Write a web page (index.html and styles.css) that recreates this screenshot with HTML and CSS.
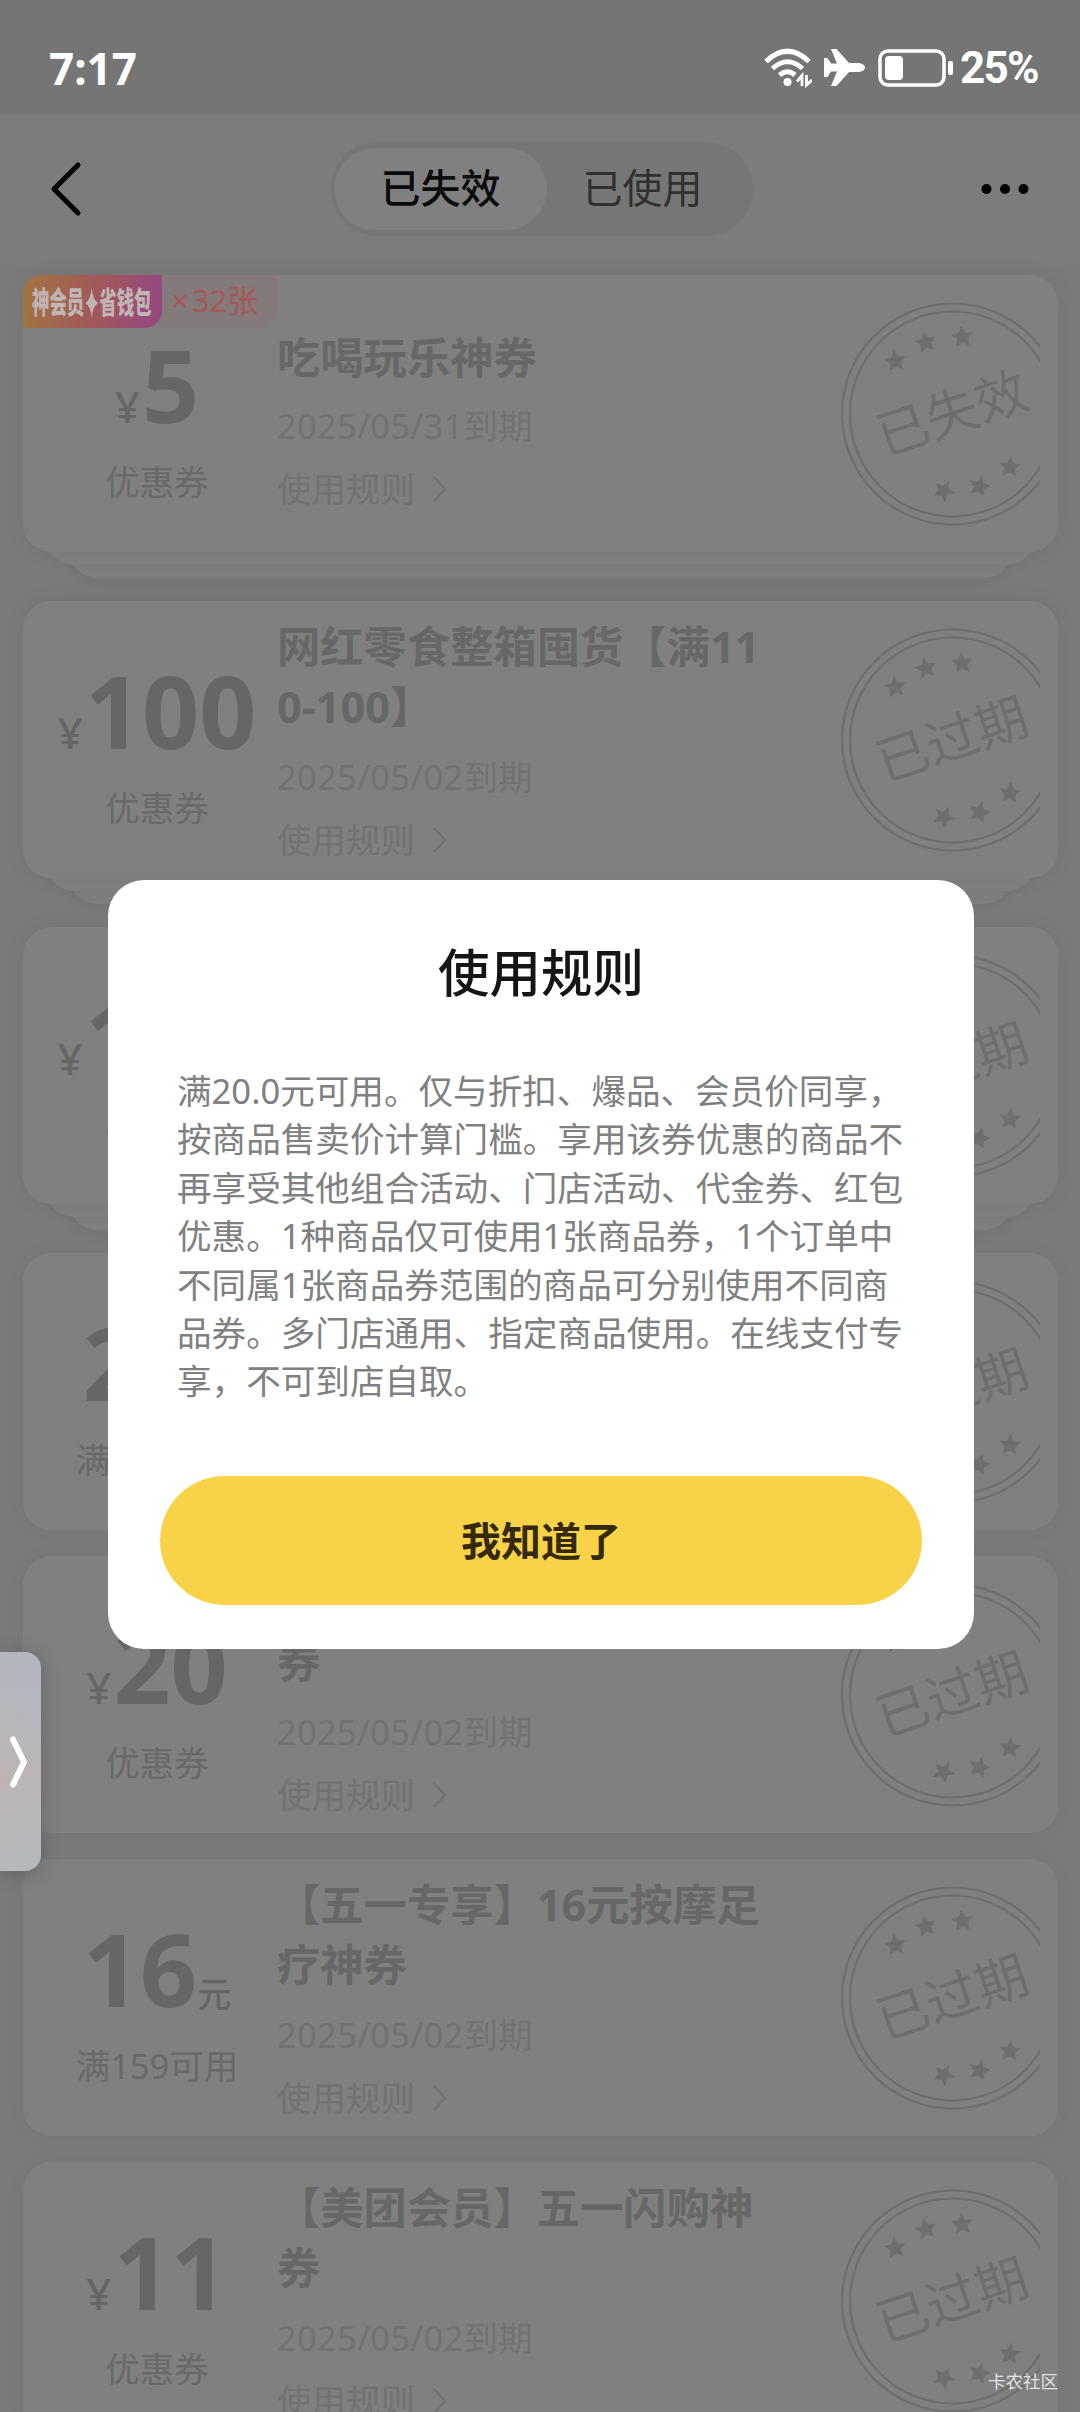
FILE: index.html
```html
<!DOCTYPE html>
<html lang="zh-CN">
<head>
<meta charset="utf-8">
<title>使用规则</title>
<link rel="stylesheet" href="styles.css">
</head>
<body>
<svg class="defs" width="0" height="0">
  <defs>
    <path id="star" d="M0-11.5 3.2-4.1 11-3.5 5.2 1.8 6.8 9.3 0 5.4-6.8 9.3-5.2 1.8-11-3.5-3.2-4.1Z"/>
    <g id="stamp">
      <circle cx="112.5" cy="112" r="110.5" fill="none" stroke="currentColor" stroke-width="2.2"/>
      <circle cx="112.5" cy="112" r="102.5" fill="none" stroke="currentColor" stroke-width="2.2"/>
      <g fill="currentColor">
        <use href="#star" transform="translate(55.3 59) rotate(-8)"/>
        <use href="#star" transform="translate(85.7 40.3) rotate(-12)"/>
        <use href="#star" transform="translate(122 35) rotate(-5)"/>
        <use href="#star" transform="translate(170 165) rotate(5)"/>
        <use href="#star" transform="translate(139.3 184.3) rotate(15)"/>
        <use href="#star" transform="translate(103.7 189) rotate(172)"/>
      </g>
    </g>
  </defs>
</svg>
<div class="screen">
  <header class="status">
    <span class="clock">7:17</span>
    <div class="status-icons">
      <svg width="48" height="40" viewBox="0 0 48 40" fill="none" stroke="#fff" stroke-width="5">
        <path d="M2 13.5Q23.5-7 45 13.500M8.500 20.500Q23.500 7 38.500 20.500M15.500 27Q23.500 20.500 31 27"/>
        <circle cx="23.500" cy="34" r="4" fill="#fff" stroke="none"/>
        <path d="M33 33.500 38 27.500V38M48 32 42.500 37V27" stroke-width="2.800"/>
      </svg>
      <svg class="plane" width="42" height="38" viewBox="0 0 42 38" fill="#fff">
        <path d="M7 0h5.500L25 14h10q6 1 6 4.500T35 23H25L12.500 37H7L13 22.500H7L3.500 28H0V9h3.500L7 14.500h6Z"/>
      </svg>
      <svg class="battery" width="76" height="40" viewBox="0 0 76 40">
        <rect x="2" y="3" width="64" height="34" rx="8" fill="none" stroke="#fff" stroke-width="3.500"/>
        <rect x="7" y="8" width="18" height="24" rx="4" fill="#fff"/>
        <rect x="70" y="13" width="5" height="14" rx="2" fill="#fff"/>
      </svg>
      <span class="percent">25%</span>
    </div>
  </header>

  <nav class="nav">
    <svg class="back" width="34" height="56" viewBox="0 0 34 56" fill="none" stroke="#000" stroke-width="5" stroke-linecap="round" stroke-linejoin="round"><path d="M29 4 5 28l24 24"/></svg>
    <div class="tabs"><span class="tab tab-on">已失效</span><span class="tab">已使用</span></div>
    <svg class="more" width="48" height="12" viewBox="0 0 48 12"><circle cx="5.500" cy="6" r="5"/><circle cx="24" cy="6" r="5"/><circle cx="42.500" cy="6" r="5"/></svg>
  </nav>

  <main class="list">
    <article class="coupon stacked">
      <div class="badge"><span class="badge-brand"><b>神会员<svg width="24" height="32" viewBox="0 0 24 32"><path d="M12 1q2 12 11 15-9 3-11 15-2-12-11-15 9-3 11-15Z" fill="currentColor"/></svg>省钱包</b></span><span class="badge-count"><i>×</i>32张</span></div>
      <div class="value"><p class="amount"><small>¥</small>5</p><p class="cond">优惠券</p></div>
      <div class="info info-single"><h3>吃喝玩乐神券</h3><p class="date">2025/05/31到期</p><p class="rule">使用规则<svg width="16" height="28" viewBox="0 0 16 28"><path d="M2 2l11 12L2 26"/></svg></p></div>
      <svg class="stamp" width="200" height="224"><use href="#stamp"/><text x="112.500" y="130" transform="rotate(-18.600 112.500 112)">已失效</text></svg>
    </article>
    <article class="coupon stacked">
      <div class="value"><p class="amount"><small>¥</small>100</p><p class="cond">优惠券</p></div>
      <div class="info"><h3>网红零食整箱囤货【满11<br>0-100】</h3><p class="date">2025/05/02到期</p><p class="rule">使用规则<svg width="16" height="28" viewBox="0 0 16 28"><path d="M2 2l11 12L2 26"/></svg></p></div>
      <svg class="stamp" width="200" height="224"><use href="#stamp"/><text x="112.500" y="130" transform="rotate(-18.600 112.500 112)">已过期</text></svg>
    </article>
    <article class="coupon stacked">
      <div class="value"><p class="amount"><small>¥</small>100</p><p class="cond">优惠券</p></div>
      <div class="info"></div>
      <svg class="stamp" width="200" height="224"><use href="#stamp"/><text x="112.500" y="130" transform="rotate(-18.600 112.500 112)">已过期</text></svg>
    </article>
    <article class="coupon">
      <div class="value"><p class="amount">20<small class="yuan">元</small></p><p class="cond">满159可用</p></div>
      <div class="info"></div>
      <svg class="stamp" width="200" height="224"><use href="#stamp"/><text x="112.500" y="130" transform="rotate(-18.600 112.500 112)">已过期</text></svg>
    </article>
    <article class="coupon">
      <div class="value"><p class="amount"><small>¥</small>20</p><p class="cond">优惠券</p></div>
      <div class="info"><h3><br>券</h3><p class="date">2025/05/02到期</p><p class="rule">使用规则<svg width="16" height="28" viewBox="0 0 16 28"><path d="M2 2l11 12L2 26"/></svg></p></div>
      <svg class="stamp" width="200" height="224"><use href="#stamp"/><text x="112.500" y="130" transform="rotate(-18.600 112.500 112)">已过期</text></svg>
    </article>
    <article class="coupon">
      <div class="value"><p class="amount">16<small class="yuan">元</small></p><p class="cond">满159可用</p></div>
      <div class="info"><h3>【五一专享】16元按摩足<br>疗神券</h3><p class="date">2025/05/02到期</p><p class="rule">使用规则<svg width="16" height="28" viewBox="0 0 16 28"><path d="M2 2l11 12L2 26"/></svg></p></div>
      <svg class="stamp" width="200" height="224"><use href="#stamp"/><text x="112.500" y="130" transform="rotate(-18.600 112.500 112)">已过期</text></svg>
    </article>
    <article class="coupon">
      <div class="value"><p class="amount"><small>¥</small>11</p><p class="cond">优惠券</p></div>
      <div class="info"><h3>【美团会员】五一闪购神<br>券</h3><p class="date">2025/05/02到期</p><p class="rule">使用规则<svg width="16" height="28" viewBox="0 0 16 28"><path d="M2 2l11 12L2 26"/></svg></p></div>
      <svg class="stamp" width="200" height="224"><use href="#stamp"/><text x="112.500" y="130" transform="rotate(-18.600 112.500 112)">已过期</text></svg>
    </article>
  </main>

  <section class="dialog">
    <h2>使用规则</h2>
    <p class="terms">满20.0元可用。仅与折扣、爆品、会员价同享，<br>按商品售卖价计算门槛。享用该券优惠的商品不<br>再享受其他组合活动、门店活动、代金券、红包<br>优惠。1种商品仅可使用1张商品券，1个订单中<br>不同属1张商品券范围的商品可分别使用不同商<br>品券。多门店通用、指定商品使用。在线支付专<br>享，不可到店自取。</p>
    <button class="ok">我知道了</button>
  </section>

  <aside class="drawer"><svg width="20" height="54" viewBox="0 0 20 54"><path d="M4 4.500 15 27 4 49.500" fill="none" stroke="#fff" stroke-width="6" stroke-linecap="round" stroke-linejoin="round"/></svg></aside>
  <span class="mark">卡农社区</span>
</div>
</body>
</html>
```
FILE: styles.css
```css
* { box-sizing: border-box; margin: 0; padding: 0; }
body { font-family: "Noto Sans", "Noto Sans CJK SC", sans-serif; }
i { font-style: normal; }
.defs { position: absolute; }
.screen { position: relative; width: 1080px; height: 2412px; overflow: hidden; background: #7a7a7a; }

.status { display: flex; justify-content: space-between; align-items: center; height: 114px; padding: 22px 43px 0 49px; background: #757575; color: #fff; font-size: 44px; font-weight: 700; }
.status-icons { display: flex; align-items: center; }
.plane { margin-left: 12px; }
.battery { margin-left: 12px; }
.percent { width: 77px; margin-left: 6px; font-family: Roboto, sans-serif; letter-spacing: -1.800px; white-space: nowrap; }

.nav { display: flex; align-items: center; height: 151px; padding: 0 51px 2px 49px; background: #7c7c7c; }
.tabs { display: flex; width: 422px; height: 94px; margin-left: 248px; padding: 6px 3px; border-radius: 47px; background: #767676; }
.tab { flex: 1; height: 82px; padding-right: 12px; border-radius: 41px; line-height: 80px; text-align: center; font-size: 40px; color: #303030; }
.tab-on { flex: 0 0 213px; padding: 0; background: #808080; color: #0c0c0c; font-weight: 500; }
.more { margin-left: auto; }

.list { isolation: isolate; display: flex; flex-direction: column; gap: 26px; padding: 10px 22px 0 23px; }
.coupon { position: relative; display: flex; flex: none; align-items: center; height: 277px; padding-right: 18px; border-radius: 28px; background: #808080; box-shadow: 0 0 22px rgba(0, 0, 0, .035); }
.stacked { margin-bottom: 23px; box-shadow: 0 0 22px rgba(0, 0, 0, .06); }
.stacked::before, .stacked::after { content: ""; position: absolute; border-radius: 28px; }
.stacked::before { left: 23px; right: 23px; bottom: -13px; height: 80px; z-index: -1; background: #808080; box-shadow: 0 3px 8px rgba(0, 0, 0, .04); }
.stacked::after { left: 46px; right: 46px; bottom: -26px; height: 80px; z-index: -2; background: #7f7f7f; box-shadow: 0 4px 14px rgba(0, 0, 0, .06); }

.value { flex: 0 0 254px; align-self: flex-start; padding: 62px 0 0 14px; display: flex; flex-direction: column; align-items: center; color: #666; }
.amount { height: 115px; line-height: 94px; font-size: 100px; font-weight: 700; white-space: nowrap; }
.amount small { font-size: 44px; font-weight: 500; margin-right: 2px; }
.amount .yuan { font-size: 34px; margin: 0; }
.cond { font-size: 34.500px; line-height: 60px; color: #696969; }
.info { flex: 1; align-self: flex-start; padding-top: 16px; white-space: nowrap; }
.info-single { padding-top: 53px; }
.info h3 { font-size: 43.300px; line-height: 60px; font-weight: 700; color: #676767; }
.date, .rule { font-size: 34.500px; line-height: 63px; color: #727272; }
.date { margin-top: 8px; letter-spacing: .3px; }
.info-single .date { margin-top: 6px; }
.rule { display: flex; align-items: center; gap: 17px; }
.rule path { fill: none; stroke: #727272; stroke-width: 2.500; }
.stamp { flex: none; color: #6e6e6e; overflow: hidden; }
.stamp text { font-size: 52px; text-anchor: middle; fill: currentColor; }

.badge { position: absolute; left: 0; top: 0; display: flex; width: 255px; height: 53px; border-radius: 18px 0 20px 0; background: #84797b; overflow: hidden; }
.badge-brand { flex: none; width: 139px; border-radius: 18px 0 18px 0; background: linear-gradient(100deg, #a27540, #a2585a 52%, #944783); color: #c0b5b5; }
.badge-brand b { display: block; width: 209px; margin-left: 9px; font-size: 30px; line-height: 54px; font-weight: 900; white-space: nowrap; transform: scaleX(.58); transform-origin: 0 50%; }
.badge-brand svg { margin: 0 1px; vertical-align: -6px; }
.badge-count { padding-left: 9px; font-size: 31px; line-height: 50px; color: #a55858; white-space: nowrap; }
.badge-count i { margin-right: 3px; }

.dialog { position: absolute; left: 108px; top: 880px; width: 866px; height: 769px; padding: 57px 52px 44px; display: flex; flex-direction: column; border-radius: 36px; background: #fff; }
.dialog h2 { text-align: center; font-size: 51.500px; line-height: 70px; font-weight: 500; color: #151515; }
.terms { margin: 60px 0 0 17px; font-size: 34.600px; line-height: 48.400px; color: #808080; white-space: nowrap; }
.ok { margin-top: auto; height: 129px; padding-bottom: 3px; border: 0; border-radius: 65px; background: #f8d347; color: #35290c; font: 700 40px "Noto Sans", "Noto Sans CJK SC", sans-serif; }

.drawer { position: absolute; left: 0; top: 1652px; width: 41px; height: 219px; padding-left: 9px; display: flex; align-items: center; border-radius: 0 16px 16px 0; background: radial-gradient(circle at 0 58%, #bfb3b2, transparent 75px), linear-gradient(#b3b6bf, #b6b9bb); box-shadow: 0 2px 18px rgba(40, 50, 55, .32); }
.mark { position: absolute; right: 22px; top: 2368px; font-size: 17.500px; line-height: 26px; color: #e2e2e2; }
```
